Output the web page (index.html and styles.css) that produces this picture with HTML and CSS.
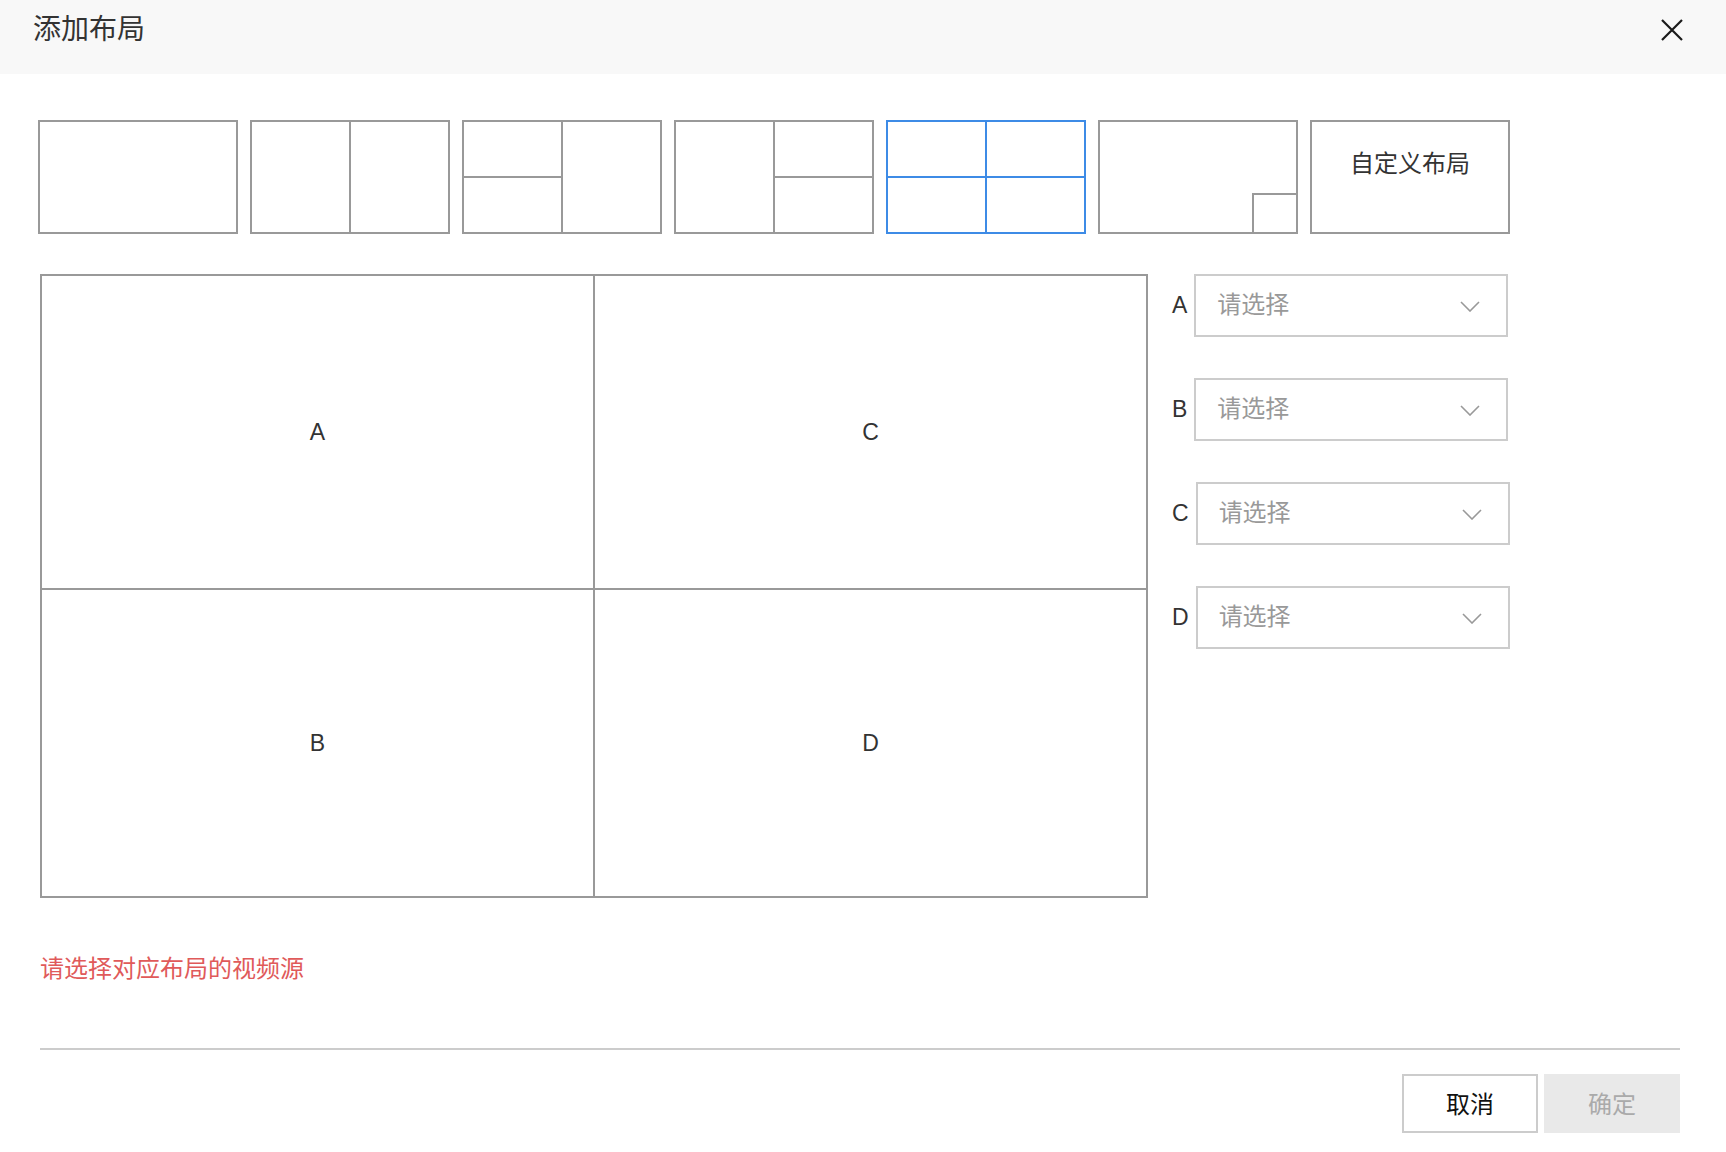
FILE: index.html
```
<html>
<head>
<meta charset="utf-8">
<link rel="stylesheet" href="styles.css">
</head>
<body>
<div class="dialog">
  <div class="dialog-head">
    <span class="dialog-title">添加布局</span>
    <span class="dialog-close">
      <svg width="22" height="22" viewBox="0 0 22 22"><path d="M1 1 L21 21 M21 1 L1 21" stroke="#1a1a1a" stroke-width="2.2" fill="none"/></svg>
    </span>
  </div>

  <div class="dialog-body">
    <ul class="layouts">
      <li class="thumb t-one"><i></i></li>
      <li class="thumb t-two"><i></i><i></i></li>
      <li class="thumb t-three-l"><i class="a"></i><i class="b"></i><i class="c"></i></li>
      <li class="thumb t-three-r"><i class="a"></i><i class="b"></i><i class="c"></i></li>
      <li class="thumb t-four active"><i></i><i></i><i></i><i></i></li>
      <li class="thumb t-pip"><i></i><b class="pip"></b></li>
      <li class="thumb t-custom">自定义布局</li>
    </ul>

    <div class="editor">
      <div class="preview">
        <div class="cell">A</div>
        <div class="cell">C</div>
        <div class="cell">B</div>
        <div class="cell">D</div>
      </div>
      <div class="sources">
        <div class="source">
          <label>A</label>
          <div class="select"><span>请选择</span><svg width="20" height="11" viewBox="0 0 20 11"><polyline points="1,1 10,10 19,1" fill="none" stroke="#999" stroke-width="1.6"/></svg></div>
        </div>
        <div class="source">
          <label>B</label>
          <div class="select"><span>请选择</span><svg width="20" height="11" viewBox="0 0 20 11"><polyline points="1,1 10,10 19,1" fill="none" stroke="#999" stroke-width="1.6"/></svg></div>
        </div>
        <div class="source">
          <label>C</label>
          <div class="select"><span>请选择</span><svg width="20" height="11" viewBox="0 0 20 11"><polyline points="1,1 10,10 19,1" fill="none" stroke="#999" stroke-width="1.6"/></svg></div>
        </div>
        <div class="source">
          <label>D</label>
          <div class="select"><span>请选择</span><svg width="20" height="11" viewBox="0 0 20 11"><polyline points="1,1 10,10 19,1" fill="none" stroke="#999" stroke-width="1.6"/></svg></div>
        </div>
      </div>
    </div>

    <p class="error">请选择对应布局的视频源</p>

    <div class="dialog-foot">
      <button class="btn">取消</button>
      <button class="btn btn-primary" disabled>确定</button>
    </div>
  </div>
</div>
</body>
</html>
```

FILE: styles.css
```
body{margin:0;background:#fff;font-family:"Liberation Sans","Noto Sans CJK SC",sans-serif;color:#333;}

.dialog-head{height:74px;box-sizing:border-box;padding:10px 43px 0 33px;background:#f8f8f8;display:flex;justify-content:space-between;align-items:flex-start;}
.dialog-title{font-size:28px;line-height:40px;color:#333;}
.dialog-close{display:flex;align-items:center;height:40px;}

.dialog-body{padding:46px 46px 0 40px;}

/* layout picker */
.layouts{list-style:none;margin:0 0 40px -2px;padding:0;display:flex;gap:12px;}
.thumb{width:200px;height:114px;flex:none;box-sizing:border-box;border:2px solid #999;background:#999;display:grid;gap:2px;grid-template-columns:1fr 1fr;grid-template-rows:1fr 1fr;position:relative;}
.thumb i{background:#fff;display:block;}
.t-one i{grid-column:1 / 3;grid-row:1 / 3;}
.t-two i{grid-row:1 / 3;}
.t-three-l .c{grid-column:2;grid-row:1 / 3;}
.t-three-l .a{grid-column:1;grid-row:1;}
.t-three-l .b{grid-column:1;grid-row:2;}
.t-three-r .a{grid-column:1;grid-row:1 / 3;}
.t-three-r .b{grid-column:2;grid-row:1;}
.t-three-r .c{grid-column:2;grid-row:2;}
.thumb.active{border-color:#3d8be6;background:#3d8be6;}
.t-pip i{grid-column:1 / 3;grid-row:1 / 3;}
.t-pip .pip{position:absolute;right:0;bottom:0;width:44px;height:39px;box-sizing:border-box;border-left:2px solid #999;border-top:2px solid #999;background:#fff;}
.t-custom{display:block;background:#fff;text-align:center;font-size:24px;line-height:34px;padding-top:25px;color:#333;}

/* preview + sources */
.editor{display:flex;align-items:flex-start;}
.preview{width:1108px;flex:none;box-sizing:border-box;border:2px solid #999;background:#999;display:grid;gap:2px;grid-template-columns:1fr 1fr;grid-template-rows:312px 306px;}
.preview .cell{background:#fff;display:flex;align-items:center;justify-content:center;font-size:23px;color:#333;}

.sources{margin-left:24px;}
.source{display:flex;align-items:center;margin-bottom:41px;}
.source label{font-size:23px;color:#333;margin-right:7px;}
.select{width:314px;height:63px;box-sizing:border-box;border:2px solid #ccc;display:flex;align-items:center;justify-content:space-between;padding:0 26px 1px 21px;}
.select svg{margin-top:2px;}
.select span{font-size:24px;line-height:34px;color:#999;}

.error{margin:54px 0 0;font-size:24px;line-height:34px;color:#e05a5a;padding-bottom:62px;border-bottom:2px solid #ccc;}

.dialog-foot{display:flex;justify-content:flex-end;gap:6px;padding-top:24px;}
.btn{width:136px;height:59px;box-sizing:border-box;border:2px solid #ccc;background:#fff;font-family:"Liberation Sans","Noto Sans CJK SC",sans-serif;font-size:24px;color:#111;padding:0 0 2px;}
.btn-primary{border-color:#e9e9e9;background:#e9e9e9;color:#aaa;}
```
